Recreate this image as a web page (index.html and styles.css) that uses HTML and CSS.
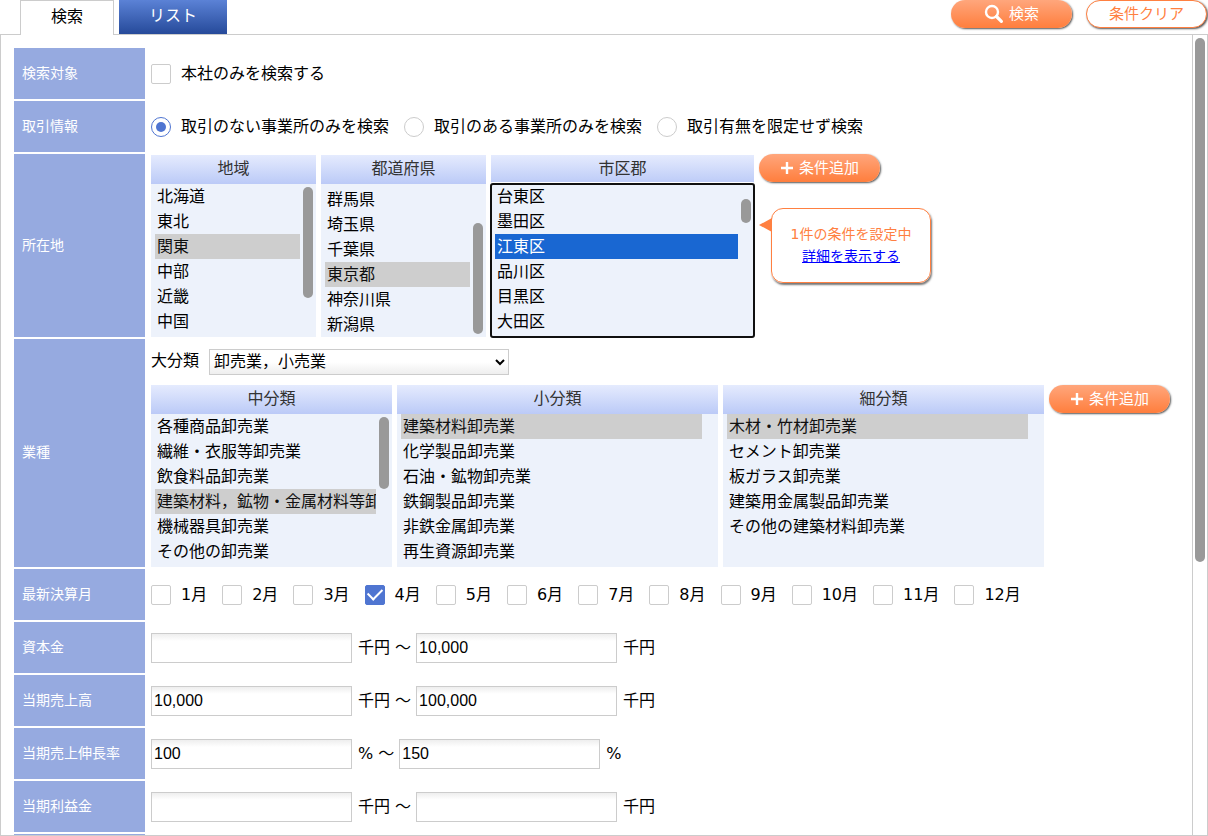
FILE: index.html
```html
<!DOCTYPE html>
<html lang="ja">
<head>
	<meta charset="utf-8">
	<meta name="viewport" content="width=device-width, initial-scale=1">
	<title>検索</title>
	<link rel="stylesheet" href="styles.css">
</head>
<body>
	<header>
		<nav class="tabs">
			<a class="tab active" href="#search">検索</a>
			<a class="tab" href="#list">リスト</a>
		</nav>
		<div class="actions">
			<button class="btn" type="submit" form="search">
				<svg width="20" height="20" viewBox="0 0 20 20" fill="none" stroke="#fff" aria-hidden="true">
					<circle cx="8" cy="8" r="6" stroke-width="2.4"/>
					<path d="M12.5 12.5 17.4 17.4" stroke-width="3.2" stroke-linecap="round"/>
				</svg>
				検索
			</button>
			<button class="btn clear" type="reset" form="search">条件クリア</button>
		</div>
	</header>

	<main class="panel">
		<form id="search" class="scroll">
			<div class="row">
				<div class="head">検索対象</div>
				<div class="cell">
					<label><input type="checkbox">本社のみを検索する</label>
				</div>
			</div>

			<div class="row">
				<div class="head">取引情報</div>
				<div class="cell">
					<label><input type="radio" name="deal" checked>取引のない事業所のみを検索</label>
					<label><input type="radio" name="deal">取引のある事業所のみを検索</label>
					<label><input type="radio" name="deal">取引有無を限定せず検索</label>
				</div>
			</div>

			<div class="row">
				<div class="head">所在地</div>
				<div class="cell lists address">
					<div class="list narrow">
						<label for="area">地域</label>
						<div class="box">
							<select id="area" size="6">
								<option>北海道</option>
								<option>東北</option>
								<option selected>関東</option>
								<option>中部</option>
								<option>近畿</option>
								<option>中国</option>
							</select>
							<span class="thumb long"></span>
						</div>
					</div>
					<div class="list narrow">
						<label for="pref">都道府県</label>
						<div class="box">
							<select id="pref" class="at-end" size="6">
								<option>群馬県</option>
								<option>埼玉県</option>
								<option>千葉県</option>
								<option selected>東京都</option>
								<option>神奈川県</option>
								<option>新潟県</option>
							</select>
							<span class="thumb long end"></span>
						</div>
					</div>
					<div class="list city">
						<label for="city">市区郡</label>
						<div class="box">
							<select id="city" size="6" autofocus>
								<option>台東区</option>
								<option>墨田区</option>
								<option selected>江東区</option>
								<option>品川区</option>
								<option>目黒区</option>
								<option>大田区</option>
							</select>
							<span class="thumb short"></span>
						</div>
					</div>
					<div class="side">
						<button class="btn" type="button">
							<svg width="14" height="14" viewBox="0 0 14 14" stroke="#fff" stroke-width="2.4" aria-hidden="true"><path d="M7 1v12M1 7h12"/></svg>
							条件追加
						</button>
						<div class="balloon">
							<svg class="tip" width="13" height="14" viewBox="0 0 13 14" aria-hidden="true"><path d="M0 7 13 0V14Z" fill="#ff8041"/></svg>
							<p>1件の条件を設定中</p>
							<a href="#conditions">詳細を表示する</a>
						</div>
					</div>
				</div>
			</div>

			<div class="row">
				<div class="head">業種</div>
				<div class="cell industry">
					<div class="major">
						<label for="major">大分類</label>
						<select id="major">
							<option>卸売業，小売業</option>
						</select>
					</div>
					<div class="lists">
						<div class="list middle">
							<label for="middle">中分類</label>
							<div class="box">
								<select id="middle" size="6">
									<option>各種商品卸売業</option>
									<option>繊維・衣服等卸売業</option>
									<option>飲食料品卸売業</option>
									<option selected>建築材料，鉱物・金属材料等卸売業</option>
									<option>機械器具卸売業</option>
									<option>その他の卸売業</option>
								</select>
								<span class="thumb medium"></span>
							</div>
						</div>
						<div class="list wide">
							<label for="minor">小分類</label>
							<div class="box">
								<select id="minor" size="6">
									<option selected>建築材料卸売業</option>
									<option>化学製品卸売業</option>
									<option>石油・鉱物卸売業</option>
									<option>鉄鋼製品卸売業</option>
									<option>非鉄金属卸売業</option>
									<option>再生資源卸売業</option>
								</select>
							</div>
						</div>
						<div class="list wide">
							<label for="detail">細分類</label>
							<div class="box">
								<select id="detail" size="6">
									<option selected>木材・竹材卸売業</option>
									<option>セメント卸売業</option>
									<option>板ガラス卸売業</option>
									<option>建築用金属製品卸売業</option>
									<option>その他の建築材料卸売業</option>
								</select>
							</div>
						</div>
						<button class="btn" type="button">
							<svg width="14" height="14" viewBox="0 0 14 14" stroke="#fff" stroke-width="2.4" aria-hidden="true"><path d="M7 1v12M1 7h12"/></svg>
							条件追加
						</button>
					</div>
				</div>
			</div>

			<div class="row">
				<div class="head">最新決算月</div>
				<div class="cell">
					<label><input type="checkbox">1月</label>
					<label><input type="checkbox">2月</label>
					<label><input type="checkbox">3月</label>
					<label><input type="checkbox" checked>4月</label>
					<label><input type="checkbox">5月</label>
					<label><input type="checkbox">6月</label>
					<label><input type="checkbox">7月</label>
					<label><input type="checkbox">8月</label>
					<label><input type="checkbox">9月</label>
					<label><input type="checkbox">10月</label>
					<label><input type="checkbox">11月</label>
					<label><input type="checkbox">12月</label>
				</div>
			</div>

			<div class="row">
				<div class="head">資本金</div>
				<div class="cell range">
					<input type="text" aria-label="資本金"><span>千円 ～</span>
					<input type="text" aria-label="資本金" value="10,000"><span>千円</span>
				</div>
			</div>

			<div class="row">
				<div class="head">当期売上高</div>
				<div class="cell range">
					<input type="text" aria-label="当期売上高" value="10,000"><span>千円 ～</span>
					<input type="text" aria-label="当期売上高" value="100,000"><span>千円</span>
				</div>
			</div>

			<div class="row">
				<div class="head">当期売上伸長率</div>
				<div class="cell range">
					<input type="text" aria-label="当期売上伸長率" value="100"><span>% ～</span>
					<input type="text" aria-label="当期売上伸長率" value="150"><span>%</span>
				</div>
			</div>

			<div class="row">
				<div class="head">当期利益金</div>
				<div class="cell range">
					<input type="text" aria-label="当期利益金"><span>千円 ～</span>
					<input type="text" aria-label="当期利益金"><span>千円</span>
				</div>
			</div>

			<div class="row">
				<div class="head"></div>
				<div class="cell"></div>
			</div>
		</form>
		<div class="track"><div class="bar"></div></div>
	</main>
</body>
</html>
```
FILE: styles.css
```css
:root {
	--line: #ccc;
	--orange: #ff8041;
	--blue: #4f75d1;
}

* {
	box-sizing: border-box;
}

body {
	margin: 0;
	height: 100vh;
	display: flex;
	flex-direction: column;
	overflow: hidden;
	color: #000;
	background: #fff;
	font: 16px/24px "DejaVu Sans", "Noto Sans CJK JP", sans-serif;
}

select, button {
	font: inherit;
}

p {
	margin: 0;
}

/* tabs and main buttons */

header {
	display: flex;
	justify-content: space-between;
	padding: 0 1px 0 20px;
}

.tabs {
	display: flex;
	gap: 5px;
}

.tab {
	width: 108px;
	height: 34px;
	line-height: 32px;
	text-align: center;
	text-decoration: none;
	color: #fff;
	background: linear-gradient(#5b82d6, #264a9a);
}

.tab.active {
	width: 94px;
	height: 35px;
	margin-bottom: -1px;
	border: 1px solid var(--line);
	border-bottom: 0;
	color: #000;
	background: #fff;
	z-index: 1;
}

.actions {
	display: flex;
	gap: 14px;
}

.btn {
	display: flex;
	align-items: center;
	justify-content: center;
	gap: 5px;
	flex: none;
	width: 121px;
	height: 28px;
	padding: 0;
	border: 0;
	border-radius: 14px;
	color: #fff;
	background: linear-gradient(#ffa67c, #ff7e3d);
	box-shadow: 1px 1px 2px #555;
	font-size: 15px;
	line-height: 26px;
}

.btn.clear {
	border: 1px solid var(--orange);
	color: var(--orange);
	background: #fff;
}

/* scrolling panel */

.panel {
	flex: 1;
	min-height: 0;
	display: flex;
	border: 1px solid var(--line);
}

.scroll {
	flex: 1;
	min-width: 0;
	overflow: hidden;
	padding: 13px;
	display: flex;
	flex-direction: column;
	gap: 2px;
}

.track {
	width: 15px;
	padding: 3px 2px;
	border-left: 1px solid var(--line);
}

.bar {
	width: 10px;
	height: 66%;
	border-radius: 5px;
	background: #999;
}

.row {
	display: flex;
	flex: none;
	min-height: 51px;
}

.head {
	display: flex;
	align-items: center;
	width: 131px;
	padding: 0 0 2px 8px;
	color: #fff;
	background: #96aae0;
	font-size: 14px;
}

.cell {
	display: flex;
	align-items: center;
	gap: 15px;
	flex: 1;
	padding-left: 6px;
	white-space: nowrap;
}

.cell > label {
	display: flex;
	align-items: center;
	gap: 10px;
}

/* controls */

input[type="checkbox"],
input[type="radio"] {
	appearance: none;
	display: grid;
	place-items: center;
	width: 20px;
	height: 20px;
	margin: 0;
	border: 1px solid var(--line);
	border-radius: 2px;
	background: #fff;
}

input[type="radio"] {
	border-radius: 50%;
}

input[type="radio"]:checked {
	border-color: var(--blue);
}

input[type="radio"]:checked::before {
	content: "";
	width: 10px;
	height: 10px;
	border-radius: 50%;
	background: var(--blue);
}

input[type="checkbox"]:checked {
	border-color: var(--blue);
	background: var(--blue);
}

input[type="checkbox"]:checked::before {
	content: "";
	width: 12px;
	height: 7px;
	margin-bottom: 4px;
	border: solid #fff;
	border-width: 0 0 2px 2px;
	rotate: -45deg;
}

input[type="text"] {
	width: 201px;
	height: 30px;
	padding: 0 2px;
	border: 1px solid var(--line);
	background: linear-gradient(#eee, #fff 7px);
	font: 16px "Liberation Sans", Arial, sans-serif;
}

.range {
	gap: 0;
}

.range span {
	padding: 0 5px 0 6px;
}

/* list boxes */

.lists {
	display: flex;
	align-items: flex-start;
	gap: 5px;
}

.address .list {
	padding-top: 1px;
}

.list label {
	display: block;
	height: 29px;
	line-height: 27px;
	text-align: center;
	color: #333;
	background: linear-gradient(#e5ebfe, #bbcaf7);
}

.narrow {
	width: 165px;
}

.city {
	width: 263px;
}

.middle {
	width: 241px;
}

.wide {
	width: 321px;
}

.box {
	position: relative;
}

.box select {
	display: block;
	width: 100%;
	height: 153px;
	padding: 0 16px 0 4px;
	border: 0;
	border-radius: 0;
	overflow: hidden;
	background: #edf2fb;
	color: #000;
}

.box select.at-end {
	padding-top: 3px;
}

.box select:focus {
	outline: 2px solid #101010;
	outline-offset: -1px;
	border-radius: 2px;
	box-shadow: 0 0 0 2px #fff;
}

/* the option's own line height is fixed by the browser, so lift the text with padding */
.box option {
	display: flex;
	align-items: center;
	height: 25px;
	min-height: 25px;
	padding: 0 2px 4px;
	overflow: hidden;
}

.thumb {
	position: absolute;
	top: 3px;
	right: 3px;
	width: 10px;
	border-radius: 5px;
	background: #999;
}

.thumb.long {
	height: 111px;
}

.thumb.end {
	top: auto;
	bottom: 3px;
}

.thumb.medium {
	height: 72px;
}

.thumb.short {
	top: 15px;
	height: 24px;
}

.industry {
	flex-direction: column;
	align-items: flex-start;
	gap: 10px;
	padding-top: 10px;
}

.major {
	display: flex;
	gap: 10px;
}

.major select {
	width: 300px;
	height: 26px;
	padding: 0 0 2px;
	border: 1px solid var(--line);
	border-radius: 0;
	color: #000;
	background: linear-gradient(#fff 50%, #eee);
}

/* current conditions */

.balloon {
	position: relative;
	width: 160px;
	margin: 26px 0 0 12px;
	padding: 14px 0 15px;
	border: 1px solid var(--orange);
	border-radius: 12px;
	box-shadow: 1px 2px 2px #777;
	text-align: center;
	color: var(--orange);
	font-size: 14px;
	line-height: 22px;
}

.balloon a {
	color: #00f;
}

.tip {
	position: absolute;
	top: 9px;
	right: 100%;
}
```
